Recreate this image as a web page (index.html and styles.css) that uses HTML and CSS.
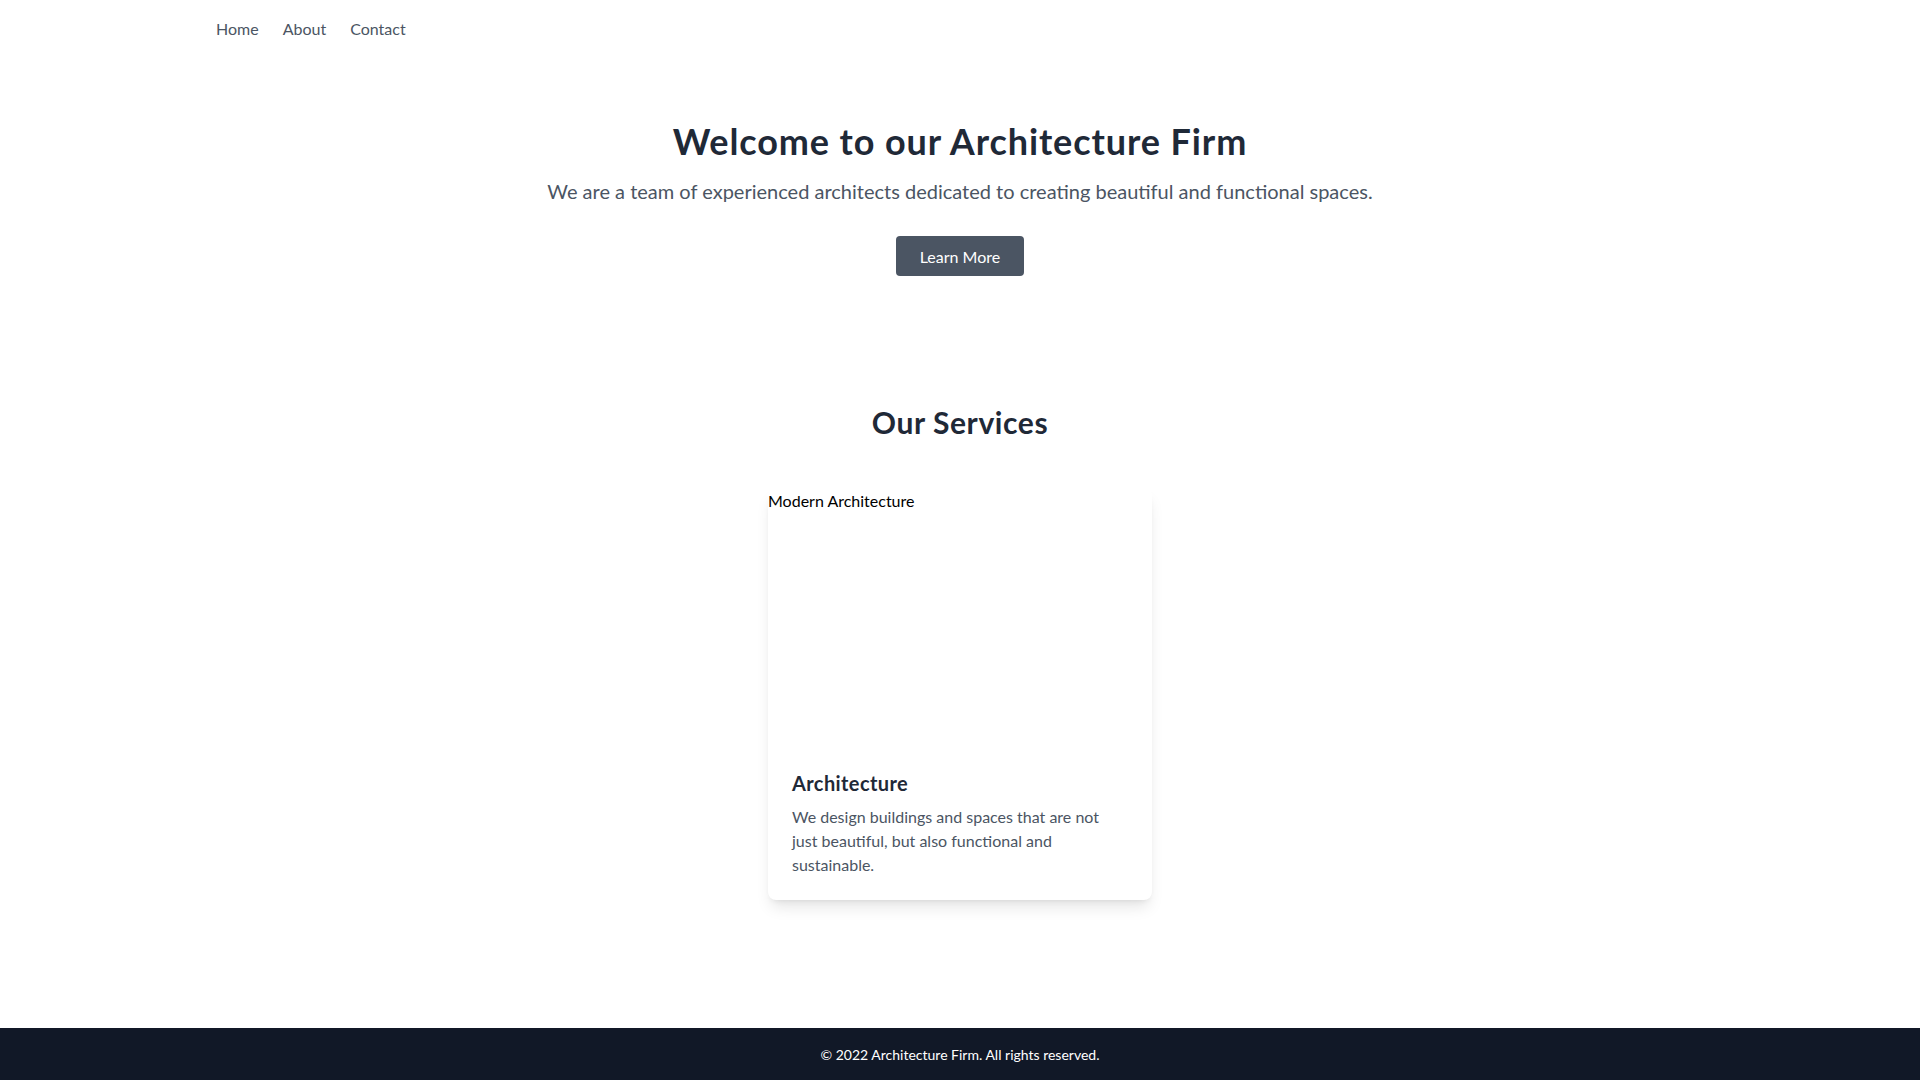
FILE: index.html
```html
<!DOCTYPE html>
<html lang="en">
<head>
<meta charset="utf-8">
<title>Architecture Firm</title>
<link rel="stylesheet" href="styles.css">
</head>
<body>
<div class="page">
  <nav class="nav">
    <div class="container nav-inner">
      <a class="nav-link" href="#">Home</a>
      <a class="nav-link" href="#">About</a>
      <a class="nav-link" href="#">Contact</a>
    </div>
  </nav>
  <main class="main">
    <section class="hero">
      <h1 class="hero-title">Welcome to our Architecture Firm</h1>
      <p class="hero-text">We are a team of experienced architects dedicated to creating beautiful and functional spaces.</p>
      <a class="btn" href="#">Learn More</a>
    </section>
    <section class="services">
      <h2 class="services-title">Our Services</h2>
      <div class="cards">
        <div class="card">
          <div class="card-image">Modern Architecture</div>
          <div class="card-body">
            <h3 class="card-title">Architecture</h3>
            <p class="card-text">We design buildings and spaces that are not just beautiful, but also functional and sustainable.</p>
          </div>
        </div>
      </div>
    </section>
  </main>
  <footer class="footer">
    <p class="footer-text">© 2022 Architecture Firm. All rights reserved.</p>
  </footer>
</div>
</body>
</html>
```
FILE: styles.css
```css
* { box-sizing: border-box; }
html, body { margin: 0; padding: 0; }
body {
  font-family: Lato, "Open Sans", sans-serif;
  background: #ffffff;
  color: #1f2937;
}
.page {
  min-height: 100vh;
  display: flex;
  flex-direction: column;
}
.container {
  max-width: 1536px;
  margin: 0 auto;
  padding: 0 24px;
}
.nav { padding: 17px 0 15px; }
.nav-inner { display: flex; gap: 24px; }
.nav-link {
  color: #4b5563;
  text-decoration: none;
  font-size: 16px;
  line-height: 24px;
}
.main { flex: 1; }
.hero {
  padding: 65px 0 64px;
  text-align: center;
}
.hero-title {
  margin: 0 0 16px;
  font-size: 36px;
  line-height: 40px;
  font-weight: 700;
  letter-spacing: 0.025em;
  color: #1f2937;
}
.hero-text {
  margin: 0 0 31px;
  font-size: 20px;
  line-height: 28px;
  color: #4b5563;
}
.btn {
  display: inline-block;
  background: #4b5563;
  color: #ffffff;
  text-decoration: none;
  font-size: 16px;
  line-height: 24px;
  padding: 9px 24px 7px;
  border-radius: 4px;
}
.services {
  padding: 64px 0;
  text-align: center;
}
.services-title {
  margin: 0 0 48px;
  font-size: 30px;
  line-height: 36px;
  font-weight: 700;
  letter-spacing: 0.02em;
  color: #1f2937;
}
.cards { display: flex; justify-content: center; }
.card {
  width: 384px;
  background: #ffffff;
  border-radius: 8px;
  overflow: hidden;
  box-shadow: 0 10px 15px -3px rgba(0,0,0,0.1), 0 4px 6px -4px rgba(0,0,0,0.1);
  text-align: left;
}
.card-image {
  height: 256px;
  padding-top: 1px;
  color: #000000;
  font-size: 16px;
  line-height: 24px;
}
.card-body { padding: 25px 24px 23px; }
.card-title {
  margin: 0 0 8px;
  font-size: 20px;
  line-height: 28px;
  font-weight: 700;
  letter-spacing: 0.02em;
  color: #1f2937;
}
.card-text {
  margin: 0;
  font-size: 16px;
  line-height: 24px;
  color: #4b5563;
}
.footer {
  background: #111827;
  padding: 17px 0 15px;
  text-align: center;
}
.footer-text {
  margin: 0;
  color: #ffffff;
  font-size: 14px;
  line-height: 20px;
}
```
